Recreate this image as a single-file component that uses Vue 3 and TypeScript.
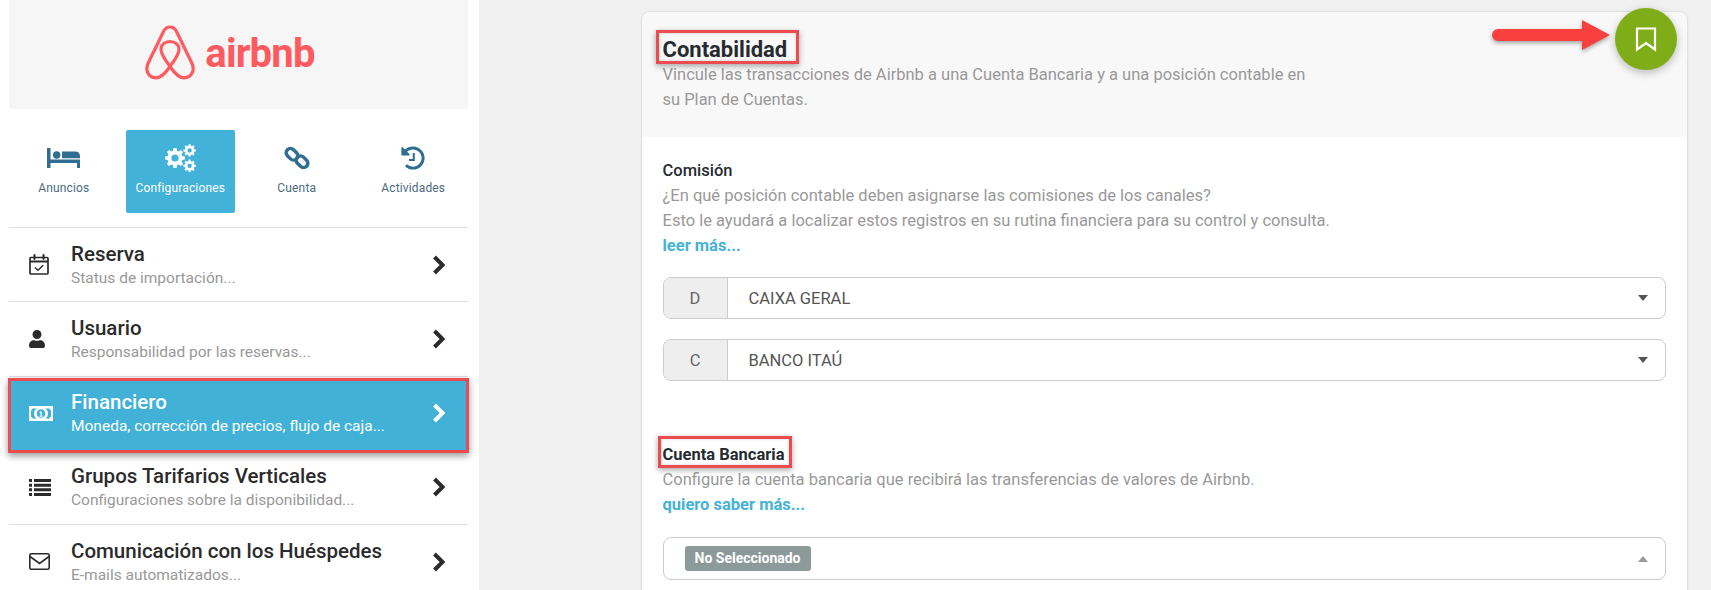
<script setup lang="ts">
// gear outline as a polygon, with a round hole in the middle
function gear(cx: number, cy: number, r: number, teeth: number, hole: number): string {
  const pts: string[] = []
  const step = (Math.PI * 2) / teeth
  const inner = r * 0.76
  for (let i = 0; i < teeth; i++) {
    const a = i * step
    const corners: [number, number][] = [
      [inner, a - step * 0.34],
      [r, a - step * 0.2],
      [r, a + step * 0.2],
      [inner, a + step * 0.34]
    ]
    for (const [rad, ang] of corners) {
      pts.push(`${(cx + rad * Math.cos(ang)).toFixed(2)} ${(cy + rad * Math.sin(ang)).toFixed(2)}`)
    }
  }
  const circle = `M${cx - hole} ${cy}a${hole} ${hole} 0 1 0 ${hole * 2} 0a${hole} ${hole} 0 1 0 ${-hole * 2} 0z`
  return `M${pts.join('L')}z${circle}`
}

const cogsPath = [gear(10, 14, 10, 8, 3.6), gear(24.6, 6.4, 6.3, 8, 2.2), gear(24.6, 21.8, 6.3, 8, 2.2)].join('')

const rows = [
  {
    title: 'Reserva',
    sub: 'Status de importación...',
    icon: `<svg width="20" height="21" viewBox="0 0 20 21" fill="none" stroke="currentColor" stroke-width="1.7">
      <rect x="1" y="3.5" width="18" height="16.5" rx="1"/>
      <path d="M1 7.5h18" stroke-width="2"/>
      <path d="M5.5 1v4M14.5 1v4" stroke-width="2" stroke-linecap="round"/>
      <path d="M6 13.5l3 2.8 5.2-5" stroke-width="1.4"/>
    </svg>`
  },
  {
    title: 'Usuario',
    sub: 'Responsabilidad por las reservas...',
    icon: `<svg width="16" height="18" viewBox="0 0 448 512" fill="currentColor">
      <path d="M224 256c70.7 0 128-57.3 128-128S294.7 0 224 0 96 57.3 96 128s57.3 128 128 128zm89.6 32h-16.7c-22.2 10.2-46.9 16-72.9 16s-50.6-5.8-72.9-16h-16.7C60.2 288 0 348.2 0 422.4V464c0 26.5 21.5 48 48 48h352c26.5 0 48-21.5 48-48v-41.6c0-74.2-60.2-134.4-134.4-134.4z"/>
    </svg>`
  },
  {
    title: 'Financiero',
    sub: 'Moneda, corrección de precios, flujo de caja...',
    active: true,
    icon: `<svg width="24" height="15" viewBox="0 0 24 15">
      <path fill="currentColor" fill-rule="evenodd" d="M0 0h24v15H0zM3.5 2.4Q3.4 4 2 4.200v6.600q1.400.2 1.500 1.800h4.300a6 6 0 0 1 0-10.200zM16.200 2.400a6 6 0 0 1 0 10.200h4.300q.1-1.600 1.500-1.800V4.200q-1.400-.2-1.500-1.800zM12 3.200a4.300 4.300 0 1 0 0 8.600 4.300 4.300 0 0 0 0-8.600z"/>
      <path fill="currentColor" d="M11 5.500h1.700v4.200h1v1h-3.200v-1h1V6.800l-1 .4v-1z"/>
    </svg>`
  },
  {
    title: 'Grupos Tarifarios Verticales',
    sub: 'Configuraciones sobre la disponibilidad...',
    icon: `<svg width="22" height="17" viewBox="0 0 22 17" fill="currentColor">
      <path d="M0 0h3v3H0zM5 0h17v3H5zM0 4.700h3v3H0zM5 4.700h17v3H5zM0 9.300h3v3H0zM5 9.300h17v3H5zM0 14h3v3H0zM5 14h17v3H5z"/>
    </svg>`
  },
  {
    title: 'Comunicación con los Huéspedes',
    sub: 'E-mails automatizados...',
    icon: `<svg width="21" height="17" viewBox="0 0 21 17" fill="none" stroke="currentColor" stroke-width="1.6">
      <rect x=".8" y=".8" width="19.400" height="15.400" rx="1.500"/>
      <path d="M1 3.500l9.500 7 9.500-7"/>
    </svg>`
  }
]
</script>

<template>
  <div class="page">
    <aside class="sidebar">
      <div class="brand">
        <svg class="belo" width="50" height="55" viewBox="0 0 50 55" fill="none" stroke="#ff5a5f" stroke-width="3.200">
          <path d="M25 2C22 2 20 3.500 18.500 6.500L3.200 38C1.500 41.500 1.300 44 2.500 47.200 4 50.800 7.500 52.800 11 52.800 16 52.800 21 47.500 25 41.500 29 47.500 34 52.800 39 52.800 42.500 52.800 46 50.800 47.500 47.200 48.700 44 48.500 41.500 46.800 38L31.500 6.500C30 3.500 28 2 25 2z"/>
          <path d="M25 41.500C19 33.500 16 28.500 16 24.500 16 19.500 20 16.500 25 16.500S34 19.500 34 24.500C34 28.500 31 33.500 25 41.500z"/>
        </svg>
        <span class="wordmark">airbnb</span>
      </div>

      <nav class="tabs">
        <a class="tab">
          <span class="tab-icon">
            <svg width="33" height="20" viewBox="0 0 33 20" fill="currentColor">
              <path d="M0 0h3.500v11.500H33V20h-3v-5H3.500v5H0z"/>
              <circle cx="9.700" cy="7" r="3.700"/>
              <path d="M15 3.500h13.500a4.500 4.500 0 0 1 4.500 4.500v2.300H15z"/>
            </svg>
          </span>
          Anuncios
        </a>
        <a class="tab tab-active">
          <span class="tab-icon">
            <svg width="31" height="28" viewBox="0 0 31 28" fill="currentColor" fill-rule="evenodd">
              <path :d="cogsPath"/>
            </svg>
          </span>
          Configuraciones
        </a>
        <a class="tab">
          <span class="tab-icon">
            <svg width="26" height="26" viewBox="0 0 26 26" fill="none" stroke="currentColor" stroke-width="3.400">
              <rect x="1.500" y="5" width="13" height="8.600" rx="4.300" transform="rotate(45 8 9.300)"/>
              <rect x="11.500" y="12.400" width="13" height="8.600" rx="4.300" transform="rotate(45 18 16.700)"/>
            </svg>
          </span>
          Cuenta
        </a>
        <a class="tab">
          <span class="tab-icon">
            <svg width="24" height="24" viewBox="0 0 512 512" fill="currentColor">
              <path d="M504 255.531c.253 136.640-111.180 248.372-247.820 248.468-59.015.042-113.223-20.530-155.822-54.911-11.077-8.940-11.905-25.541-1.839-35.607l11.267-11.267c8.609-8.609 22.353-9.551 31.891-1.984C173.062 425.135 212.781 440 256 440c101.705 0 184-82.311 184-184 0-101.705-82.311-184-184-184-48.814 0-93.149 18.969-126.068 49.932l50.754 50.754c10.080 10.080 2.941 27.314-11.313 27.314H24c-8.837 0-16-7.163-16-16V38.627c0-14.254 17.234-21.393 27.314-11.314l49.372 49.372C129.209 34.136 189.552 8 256 8c136.810 0 247.747 110.780 248 247.531z"/>
              <path d="M250 150h44v170H170v-44h80z"/>
            </svg>
          </span>
          Actividades
        </a>
      </nav>

      <ul class="menu">
        <li v-for="row in rows" :key="row.title" class="menu-row" :class="{ active: row.active }">
          <span class="menu-icon" v-html="row.icon"></span>
          <span class="menu-text">
            <span class="menu-title">{{ row.title }}</span>
            <span class="menu-sub">{{ row.sub }}</span>
          </span>
          <svg class="chevron" width="14" height="20" viewBox="0 0 14 20" fill="none" stroke="currentColor" stroke-width="4">
            <path d="M2.500 2l8 8-8 8"/>
          </svg>
        </li>
      </ul>
    </aside>

    <main class="main">
      <section class="card">
        <header class="card-head">
          <h1 class="card-title"><span class="mark mark-title">Contabilidad</span></h1>
          <p class="muted head-desc">Vincule las transacciones de Airbnb a una Cuenta Bancaria y a una posición contable en su Plan de Cuentas.</p>

          <svg class="arrow" width="120" height="36" viewBox="0 0 120 36">
            <path d="M6 12h84V3l28 15-28 15v-9H6a6 6 0 0 1 0-12z" fill="#f9403f"/>
          </svg>
          <button class="fab" type="button">
            <svg width="22" height="25" viewBox="0 0 22 25" fill="none" stroke="#fff" stroke-width="2.200">
              <path d="M2 1.500h18v21l-9-6.500-9 6.500z"/>
            </svg>
          </button>
        </header>

        <div class="card-body">
          <h2 class="section-title">Comisión</h2>
          <p class="muted">¿En qué posición contable deben asignarse las comisiones de los canales?<br>Esto le ayudará a localizar estos registros en su rutina financiera para su control y consulta.</p>
          <a class="more">leer más...</a>

          <div class="select first">
            <span class="prepend">D</span>
            <span class="value">CAIXA GERAL</span>
            <i class="caret"></i>
          </div>
          <div class="select second">
            <span class="prepend">C</span>
            <span class="value">BANCO ITAÚ</span>
            <i class="caret"></i>
          </div>

          <h2 class="section-title bank"><span class="mark mark-bank">Cuenta Bancaria</span></h2>
          <p class="muted">Configure la cuenta bancaria que recibirá las transferencias de valores de Airbnb.</p>
          <a class="more">quiero saber más...</a>

          <div class="select third">
            <span class="badge">No Seleccionado</span>
            <i class="caret up"></i>
          </div>
        </div>
      </section>
    </main>
  </div>
</template>

<style>
html, body {
  margin: 0;
  overflow: hidden;
}
</style>

<style scoped>
.page {
  display: grid;
  grid-template-columns: 479px 1fr;
  height: 590px;
  overflow: hidden;
  background: #f0f0f0;
  font-family: Roboto, "Liberation Sans", sans-serif;
  color: #2b2b2b;
}

/* sidebar */
.sidebar {
  background: #fff;
  padding: 0 11px 0 9px;
  overflow: hidden;
}

.brand {
  display: flex;
  align-items: center;
  justify-content: center;
  gap: 10px;
  height: 109px;
  padding: 0 17px 5px 0;
  box-sizing: border-box;
  background: #f6f6f6;
  border-radius: 0 0 2px 2px;
}

.wordmark {
  font-size: 40px;
  font-weight: 700;
  letter-spacing: -0.8px;
  line-height: 1;
  color: #ff5a5f;
  margin-top: 4px;
}

.tabs {
  display: grid;
  grid-template-columns: repeat(4, 1fr);
  gap: 7px;
  margin-top: 21px;
}

.tab {
  display: flex;
  flex-direction: column;
  align-items: center;
  height: 83px;
  padding-top: 13px;
  box-sizing: border-box;
  font-size: 12px;
  line-height: 16px;
  letter-spacing: 0.15px;
  color: #4d6b80;
  border-radius: 2px;
}

.tab-icon {
  display: flex;
  align-items: center;
  justify-content: center;
  height: 30px;
  margin-bottom: 7px;
  color: #2f6e91;
}

.tab-active {
  background: #42b2d8;
  color: #fff;
}

.tab-active .tab-icon {
  color: #fff;
}

.menu {
  list-style: none;
  margin: 14px 0 0;
  padding: 0;
}

.menu-row {
  position: relative;
  display: flex;
  align-items: center;
  height: 74.25px;
  box-sizing: border-box;
  padding: 0 22px 0 20px;
  border-top: 1px solid #ddd;
}

.menu-row.active {
  z-index: 1;
  color: #fff;
}

.menu-row.active::before {
  content: "";
  position: absolute;
  inset: 1px -1px -3px -1px;
  border: 3px solid #ec4b50;
  background: #41b1d7;
  box-shadow: 0 3px 7px rgba(0, 0, 0, 0.4);
}

.menu-icon,
.menu-text,
.chevron {
  position: relative;
}

.menu-icon {
  display: flex;
  width: 42px;
  flex: none;
}

.menu-icon :deep(svg) {
  display: block;
}

.menu-text {
  flex: 1;
  display: flex;
  flex-direction: column;
  gap: 2px;
  min-width: 0;
}

.menu-title {
  font-size: 20.5px;
  font-weight: 500;
  line-height: 24px;
}

.menu-sub {
  font-size: 15.5px;
  line-height: 20px;
  color: #999;
}

.active .menu-sub {
  color: #fff;
}

/* main panel */
.main {
  padding: 12px 24px 0 163px;
  min-width: 0;
}

.card {
  position: relative;
  height: 620px;
  background: #fff;
  border-radius: 8px 8px 0 0;
  box-shadow: 0 0 2px rgba(0, 0, 0, 0.22);
}

.card-head {
  position: relative;
  height: 125px;
  box-sizing: border-box;
  padding: 25px 21px 0 20.5px;
  background: #f8f8f8;
  border-radius: 8px 8px 0 0;
}

.card-title {
  margin: 0;
  font-size: 22px;
  font-weight: 700;
  line-height: 25px;
  color: #262b30;
}

.mark {
  position: relative;
  display: inline-block;
}

.mark::after {
  content: "";
  position: absolute;
  border: 3px solid #ec4b50;
  box-shadow: 0 2px 6px rgba(0, 0, 0, 0.35), inset 0 0 3px rgba(0, 0, 0, 0.2);
  pointer-events: none;
}

.mark-title::after {
  inset: -7px -12px -2px -7px;
}

.mark-bank::after {
  inset: -6px -7px -1px -5px;
}

.muted {
  margin: 0;
  font-size: 16.5px;
  line-height: 25px;
  color: #999;
}

.head-desc {
  max-width: 650px;
}

.arrow {
  position: absolute;
  left: 850px;
  top: 5px;
  filter: drop-shadow(0 2px 2px rgba(0, 0, 0, 0.35));
}

.fab {
  position: absolute;
  top: -4px;
  right: 10px;
  display: flex;
  align-items: center;
  justify-content: center;
  width: 62px;
  height: 62px;
  padding: 0;
  border: 0;
  border-radius: 50%;
  background: #7fad17;
  box-shadow: 0 3px 8px rgba(0, 0, 0, 0.25);
}

.card-body {
  padding: 21px 21px 0 20.5px;
}

.section-title {
  margin: 0;
  font-size: 16.5px;
  font-weight: 500;
  line-height: 25px;
  color: #262b30;
}

.section-title.bank {
  margin-top: 61px;
  font-weight: 700;
}

.more {
  display: block;
  font-size: 16.5px;
  font-weight: 700;
  line-height: 25px;
  color: #45b2d6;
}

.select {
  display: flex;
  align-items: stretch;
  height: 42px;
  box-sizing: border-box;
  border: 1px solid #ccc;
  border-radius: 8px;
  overflow: hidden;
}

.select.first {
  margin-top: 19px;
}

.select.second {
  margin-top: 20px;
}

.select.third {
  margin-top: 20px;
  height: 43px;
  padding-left: 21px;
  align-items: center;
}

.prepend {
  display: flex;
  align-items: center;
  justify-content: center;
  width: 63px;
  flex: none;
  background: #eee;
  border-right: 1px solid #ccc;
  font-size: 16.5px;
  color: #666;
}

.value {
  flex: 1;
  display: flex;
  align-items: center;
  padding-left: 21px;
  font-size: 16.5px;
  color: #555;
}

.caret {
  align-self: center;
  width: 0;
  height: 0;
  margin: 0 17px 0 auto;
  border-left: 5.5px solid transparent;
  border-right: 5.5px solid transparent;
  border-top: 6px solid #555;
}

.caret.up {
  border-top: 0;
  border-bottom: 6px solid #999;
}

.badge {
  padding: 0 10px;
  height: 25px;
  line-height: 25px;
  border-radius: 3px;
  background: #8c9a9a;
  color: #fff;
  font-size: 14px;
  font-weight: 700;
}
</style>
